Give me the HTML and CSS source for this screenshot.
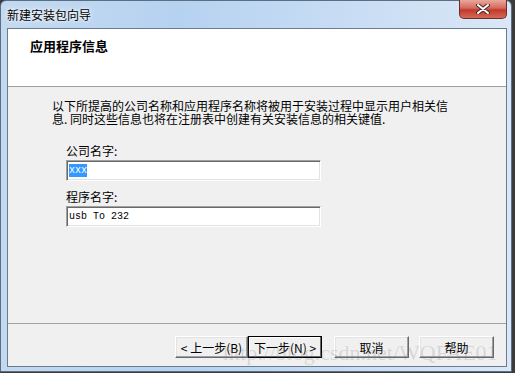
FILE: index.html
```html
<!DOCTYPE html>
<html lang="zh-CN">
<head>
    <meta charset="UTF-8">
    <title>新建安装包向导</title>
    <link rel="stylesheet" href="styles.css">
</head>
<body>
    <div class="window">
        <div class="titlebar">
            <span class="title">新建安装包向导</span>
            <div class="close">
                <svg width="14" height="10" viewBox="0 0 14 10">
                    <path d="M2 1 L12 9 M12 1 L2 9" stroke="#4a2a26" stroke-width="4" stroke-linecap="round"/>
                    <path d="M2 1 L12 9 M12 1 L2 9" stroke="#ffffff" stroke-width="2" stroke-linecap="round"/>
                </svg>
            </div>
        </div>
        <div class="client">
            <div class="header">
                <h1>应用程序信息</h1>
            </div>
            <div class="content">
                <p class="desc">以下所提高的公司名称和应用程序名称将被用于安装过程中显示用户相关信<br>息. 同时这些信息也将在注册表中创建有关安装信息的相关键值.</p>
                <div class="field first">
                    <label>公司名字:</label>
                    <div class="textbox"><span class="selected">xxx</span></div>
                </div>
                <div class="field">
                    <label>程序名字:</label>
                    <div class="textbox">usb To 232</div>
                </div>
            </div>
            <div class="buttons">
                <button class="btn back">&lt; 上一步(B)</button>
                <button class="btn next">下一步(N) &gt;</button>
                <button class="btn cancel">取消</button>
                <button class="btn help">帮助</button>
            </div>
            <div class="watermark">http://blog.csdn.net/WQFAE01</div>
        </div>
    </div>
</body>
</html>
```

FILE: styles.css
```css
body {
    margin: 0;
    background-color: #3c3c3c;
    font-family: "Noto Sans CJK SC", "Liberation Sans", sans-serif;
    font-size: 12px;
    color: #000;
}

.window {
    box-sizing: border-box;
    width: 512px;
    height: 372px;
    border: 1px solid #5b6e84;
    border-radius: 6px 6px 0 0;
    padding: 0 4px 4px 6px;
    background: linear-gradient(90deg, #c3d9f0 0%, #b6d2f1 35%, #c9ddf4 70%, #dae7f6 100%);
}

.titlebar {
    height: 27px;
    display: flex;
    justify-content: space-between;
    align-items: flex-start;
}

.title {
    padding-top: 7px;
    line-height: 14px;
    text-shadow: 0 0 6px #fff, 0 0 3px #fff;
}

.close {
    width: 48px;
    height: 19px;
    margin-top: -1px;
    box-sizing: border-box;
    border: 1px solid #6b2f2a;
    border-top: none;
    border-radius: 0 0 5px 5px;
    background: linear-gradient(180deg, #e9a89d 0%, #d5685c 45%, #c0392d 55%, #d46a55 100%);
    display: flex;
    justify-content: center;
    align-items: center;
}

.client {
    position: relative;
    box-sizing: border-box;
    width: 500px;
    height: 339px;
    border: 1px solid #6b7a8c;
    background-color: #f0f0f0;
    display: flex;
    flex-direction: column;
}

.header {
    height: 58px;
    background-color: #fff;
    border-bottom: 1px solid #a0a0a0;
    padding: 9px 0 0 22px;
    box-sizing: border-box;
}

.header h1 {
    margin: 0;
    font-size: 13px;
    font-weight: bold;
    line-height: 16px;
}

.content {
    flex: 1;
    border-bottom: 1px solid #a0a0a0;
}

.desc {
    margin: 12px 0 0 44px;
    line-height: 13px;
}

.field {
    margin: 9px 0 0 58px;
}

.field.first {
    margin-top: 19px;
}

.field label {
    display: block;
    line-height: 14px;
    margin-bottom: 2px;
}

.textbox {
    box-sizing: border-box;
    width: 255px;
    height: 21px;
    background-color: #fff;
    border-top: 1px solid #a0a0a0;
    border-left: 1px solid #a0a0a0;
    border-right: 1px solid #fff;
    border-bottom: 1px solid #fff;
    box-shadow: inset 1px 1px 0 #696969, inset -1px -1px 0 #e3e3e3;
    padding: 3px 0 0 2px;
    font-family: "Liberation Mono", monospace;
    font-size: 10px;
    line-height: 14px;
}

.selected {
    background-color: #3399ff;
    color: #fff;
    padding: 1px 0;
}

.buttons {
    height: 42px;
    display: flex;
    align-items: flex-start;
    padding: 12px 0 0 167px;
    box-sizing: border-box;
}

.btn {
    box-sizing: border-box;
    height: 22px;
    padding: 0;
    font-family: "Noto Sans CJK SC", "Liberation Sans", sans-serif;
    font-size: 12px;
    color: #000;
    background-color: #f0f0f0;
    border-top: 1px solid #fff;
    border-left: 1px solid #fff;
    border-right: 1px solid #696969;
    border-bottom: 1px solid #696969;
    box-shadow: inset -1px -1px 0 #a0a0a0, inset 1px 1px 0 #e3e3e3;
}

.back {
    width: 73px;
}

.next {
    width: 74px;
    border: 1px solid #000;
    box-shadow: inset -1px -1px 0 #696969, inset 1px 1px 0 #fff;
}

.cancel {
    width: 75px;
    margin-left: 12px;
}

.help {
    width: 75px;
    margin-left: 10px;
}

.watermark {
    position: absolute;
    left: 215px;
    top: 313px;
    font-family: "Liberation Serif", serif;
    font-size: 22px;
    line-height: 22px;
    color: rgba(120, 120, 120, 0.22);
    white-space: nowrap;
    pointer-events: none;
}
```
